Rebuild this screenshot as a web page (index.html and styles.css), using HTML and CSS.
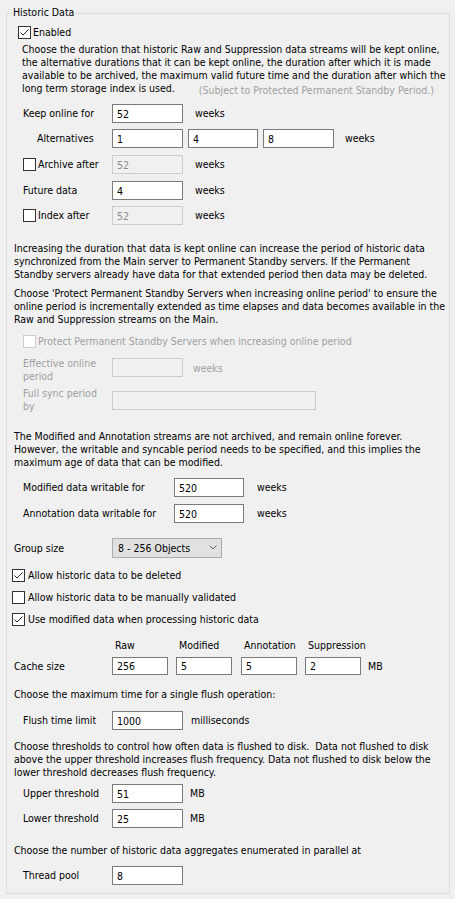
FILE: index.html
```html
<!DOCTYPE html>
<html>
<head>
<meta charset="utf-8">
<title>Historic Data</title>
<link rel="stylesheet" href="styles.css">
</head>
<body>
<div class="group">
  <span class="legend">Historic Data</span>

  <div class="cbrow mt12 pl11">
    <span class="cb"><svg width="13" height="13" viewBox="0 0 13 13"><rect x="0.5" y="0.5" width="12" height="12" fill="#fff" stroke="#333"/><polyline points="2.5,6.5 5,9 10.5,3.5" fill="none" stroke="#222" stroke-width="1"/></svg></span>
    <span class="cbtext">Enabled</span>
  </div>

  <p class="para mt4 pl15">Choose the duration that historic Raw and Suppression data streams will be kept online,<br>the alternative durations that it can be kept online, the duration after which it is made<br>available to be archived, the maximum valid future time and the duration after which the</p>
  <div class="lastline pl15">
    <span>long term storage index is used.</span>
    <span class="note">(Subject to Protected Permanent Standby Period.)</span>
  </div>

  <div class="row mt7 pl16">
    <span class="lbl w89">Keep online for</span>
    <input class="tb w71" type="text" value="52">
    <span class="unit ml12">weeks</span>
  </div>

  <div class="row mt6 pl16">
    <span class="lbl w89 indent">Alternatives</span>
    <input class="tb w71" type="text" value="1">
    <input class="tb w70 ml5" type="text" value="4">
    <input class="tb w71 ml5" type="text" value="8">
    <span class="unit ml11">weeks</span>
  </div>

  <div class="row mt7 pl16">
    <span class="lbl w89 cblbl">
      <span class="cb"><svg width="13" height="13" viewBox="0 0 13 13"><rect x="0.5" y="0.5" width="12" height="12" fill="#fff" stroke="#333"/></svg></span>
      <span class="cbtext">Archive after</span>
    </span>
    <input class="tb w71" type="text" value="52" disabled>
    <span class="unit ml12">weeks</span>
  </div>

  <div class="row mt7 pl16">
    <span class="lbl w89">Future data</span>
    <input class="tb w71" type="text" value="4">
    <span class="unit ml12">weeks</span>
  </div>

  <div class="row mt6 pl16">
    <span class="lbl w89 cblbl">
      <span class="cb"><svg width="13" height="13" viewBox="0 0 13 13"><rect x="0.5" y="0.5" width="12" height="12" fill="#fff" stroke="#333"/></svg></span>
      <span class="cbtext">Index after</span>
    </span>
    <input class="tb w71" type="text" value="52" disabled>
    <span class="unit ml12">weeks</span>
  </div>

  <p class="para mt17 pl7">Increasing the duration that data is kept online can increase the period of historic data<br>synchronized from the Main server to Permanent Standby servers. If the Permanent<br>Standby servers already have data for that extended period then data may be deleted.</p>

  <p class="para mt6 pl7">Choose 'Protect Permanent Standby Servers when increasing online period' to ensure the<br>online period is incrementally extended as time elapses and data becomes available in the<br>Raw and Suppression streams on the Main.</p>

  <div class="cbrow mt9 pl16 disabled">
    <span class="cb"><svg width="13" height="13" viewBox="0 0 13 13"><rect x="0.5" y="0.5" width="12" height="12" fill="#fff" stroke="#cccccc"/></svg></span>
    <span class="cbtext">Protect Permanent Standby Servers when increasing online period</span>
  </div>

  <div class="row2 mt9 pl16 disabled">
    <span class="lbl w89">Effective online<br>period</span>
    <input class="tb w71 off1" type="text" value="" disabled>
    <span class="unit ml10 off5">weeks</span>
  </div>

  <div class="row2 mt4 pl16 disabled">
    <span class="lbl w89">Full sync period<br>by</span>
    <input class="tb w204 off4" type="text" value="" disabled>
  </div>

  <p class="para mt17 pl7">The Modified and Annotation streams are not archived, and remain online forever.<br>However, the writable and syncable period needs to be specified, and this implies the<br>maximum age of data that can be modified.</p>

  <div class="row mt9 pl16">
    <span class="lbl w151">Modified data writable for</span>
    <input class="tb w70" type="text" value="520">
    <span class="unit ml13">weeks</span>
  </div>

  <div class="row mt7 pl16">
    <span class="lbl w151">Annotation data writable for</span>
    <input class="tb w70" type="text" value="520">
    <span class="unit ml13">weeks</span>
  </div>

  <div class="row h20 mt15 pl7">
    <span class="lbl w98">Group size</span>
    <div class="combo">
      <span>8 - 256 Objects</span>
      <svg class="chev" width="8" height="5" viewBox="0 0 8 5"><polyline points="0.5,0.5 4,4 7.5,0.5" fill="none" stroke="#606060" stroke-width="1"/></svg>
    </div>
  </div>

  <div class="cbrow mt11 pl5">
    <span class="cb"><svg width="13" height="13" viewBox="0 0 13 13"><rect x="0.5" y="0.5" width="12" height="12" fill="#fff" stroke="#333"/><polyline points="2.5,6.5 5,9 10.5,3.5" fill="none" stroke="#222" stroke-width="1"/></svg></span>
    <span class="cbtext gap3">Allow historic data to be deleted</span>
  </div>

  <div class="cbrow mt9 pl5">
    <span class="cb"><svg width="13" height="13" viewBox="0 0 13 13"><rect x="0.5" y="0.5" width="12" height="12" fill="#fff" stroke="#333"/></svg></span>
    <span class="cbtext gap3">Allow historic data to be manually validated</span>
  </div>

  <div class="cbrow mt9 pl5">
    <span class="cb"><svg width="13" height="13" viewBox="0 0 13 13"><rect x="0.5" y="0.5" width="12" height="12" fill="#fff" stroke="#333"/><polyline points="2.5,6.5 5,9 10.5,3.5" fill="none" stroke="#222" stroke-width="1"/></svg></span>
    <span class="cbtext gap3">Use modified data when processing historic data</span>
  </div>

  <div class="headrow mt13 pl7">
    <span class="w98"></span>
    <span class="colhead">Raw</span>
    <span class="colhead ml8">Modified</span>
    <span class="colhead ml9">Annotation</span>
    <span class="colhead ml8">Suppression</span>
  </div>

  <div class="row h18 mt5 pl7">
    <span class="lbl w98">Cache size</span>
    <input class="tb w56 h18" type="text" value="256">
    <input class="tb w56 h18 ml8" type="text" value="5">
    <input class="tb w56 h18 ml9" type="text" value="5">
    <input class="tb w56 h18 ml8" type="text" value="2">
    <span class="unit ml7">MB</span>
  </div>

  <p class="para mt13 pl7">Choose the maximum time for a single flush operation:</p>

  <div class="row mt10 pl16">
    <span class="lbl w89">Flush time limit</span>
    <input class="tb w71" type="text" value="1000">
    <span class="unit ml8">milliseconds</span>
  </div>

  <p class="para mt10 pl7">Choose thresholds to control how often data is flushed to disk.&nbsp; Data not flushed to disk<br>above the upper threshold increases flush frequency. Data not flushed to disk below the<br>lower threshold decreases flush frequency.</p>

  <div class="row mt5 pl16">
    <span class="lbl w89">Upper threshold</span>
    <input class="tb w71" type="text" value="51">
    <span class="unit ml7">MB</span>
  </div>

  <div class="row mt6 pl16">
    <span class="lbl w89">Lower threshold</span>
    <input class="tb w71" type="text" value="25">
    <span class="unit ml7">MB</span>
  </div>

  <p class="para mt16 pl7">Choose the number of historic data aggregates enumerated in parallel at</p>

  <div class="row mt9 pl16">
    <span class="lbl w89">Thread pool</span>
    <input class="tb w71" type="text" value="8">
  </div>
</div>
</body>
</html>
```

FILE: styles.css
```css
* { box-sizing: border-box; }

html, body {
  margin: 0;
  padding: 0;
  background: #f0f0f0;
}

body {
  width: 455px;
  height: 899px;
  overflow: hidden;
  font-family: "DejaVu Sans Condensed", "DejaVu Sans", sans-serif;
  font-stretch: condensed;
  font-size: 10.5px;
  line-height: 13px;
  color: #000;
}

.group {
  position: relative;
  margin: 13px 5px 0 6px;
  border: 1px solid #dcdcdc;
  padding: 0 0 8px 0;
  display: flex;
  flex-direction: column;
}

.legend {
  position: absolute;
  top: -8px;
  left: 4px;
  padding: 0 2px;
  background: #f0f0f0;
  white-space: nowrap;
}

.para {
  margin: 0;
  white-space: nowrap;
}

.lastline {
  display: flex;
  align-items: flex-start;
  justify-content: space-between;
  padding-right: 15px;
  white-space: nowrap;
}

.note {
  padding-top: 2px;
  color: #a0a0a0;
}

.row {
  display: flex;
  align-items: center;
  height: 19px;
  white-space: nowrap;
}

.row2 {
  display: flex;
  align-items: flex-start;
  height: 26px;
  white-space: nowrap;
}

.cbrow {
  display: flex;
  align-items: center;
  height: 13px;
  white-space: nowrap;
}

.headrow {
  display: flex;
  align-items: center;
  height: 13px;
  white-space: nowrap;
}

.colhead {
  width: 56px;
  padding-left: 3px;
}

.lbl {
  flex: none;
  display: flex;
  align-items: center;
}

.cblbl { }

.indent { padding-left: 14px; }

.cb {
  flex: none;
  width: 13px;
  height: 13px;
  display: block;
}

.cb svg { display: block; }

.cbtext { padding-left: 2px; }
.cbtext.gap3 { padding-left: 3px; }

.disabled { color: #a0a0a0; }

.tb {
  flex: none;
  height: 19px;
  margin: 0;
  padding: 0 4px;
  border: 1px solid #7a7a7a;
  background: #fff;
  font: inherit;
  font-size: 10.5px;
  line-height: 13px;
  color: #000;
  outline: none;
}

.tb:disabled {
  border-color: #cccccc;
  background: #f0f0f0;
  color: #8d8d8d;
}

.combo {
  flex: none;
  width: 110px;
  height: 20px;
  border: 1px solid #adadad;
  background: #e1e1e1;
  display: flex;
  align-items: center;
  justify-content: space-between;
  padding: 0 4px 0 5px;
}

.chev { display: block; margin-top: -1px; }

.unit { flex: none; }

.w56 { width: 56px; }
.w70 { width: 70px; }
.w71 { width: 71px; }
.w89 { width: 89px; }
.w98 { width: 98px; flex: none; }
.w151 { width: 151px; }
.w204 { width: 204px; }
.h18 { height: 18px; }
.h20 { height: 20px; }

.off1 { margin-top: 1px; }
.off4 { margin-top: 4px; }
.off5 { margin-top: 5px; }

.mt4 { margin-top: 4px; }
.mt5 { margin-top: 5px; }
.mt6 { margin-top: 6px; }
.mt7 { margin-top: 7px; }
.mt9 { margin-top: 9px; }
.mt10 { margin-top: 10px; }
.mt11 { margin-top: 11px; }
.mt12 { margin-top: 12px; }
.mt13 { margin-top: 13px; }
.mt15 { margin-top: 15px; }
.mt16 { margin-top: 16px; }
.mt17 { margin-top: 17px; }

.ml5 { margin-left: 5px; }
.ml7 { margin-left: 7px; }
.ml8 { margin-left: 8px; }
.ml9 { margin-left: 9px; }
.ml10 { margin-left: 10px; }
.ml11 { margin-left: 11px; }
.ml12 { margin-left: 12px; }
.ml13 { margin-left: 13px; }

.pl5 { padding-left: 5px; }
.pl7 { padding-left: 7px; }
.pl11 { padding-left: 11px; }
.pl15 { padding-left: 15px; }
.pl16 { padding-left: 16px; }
```
